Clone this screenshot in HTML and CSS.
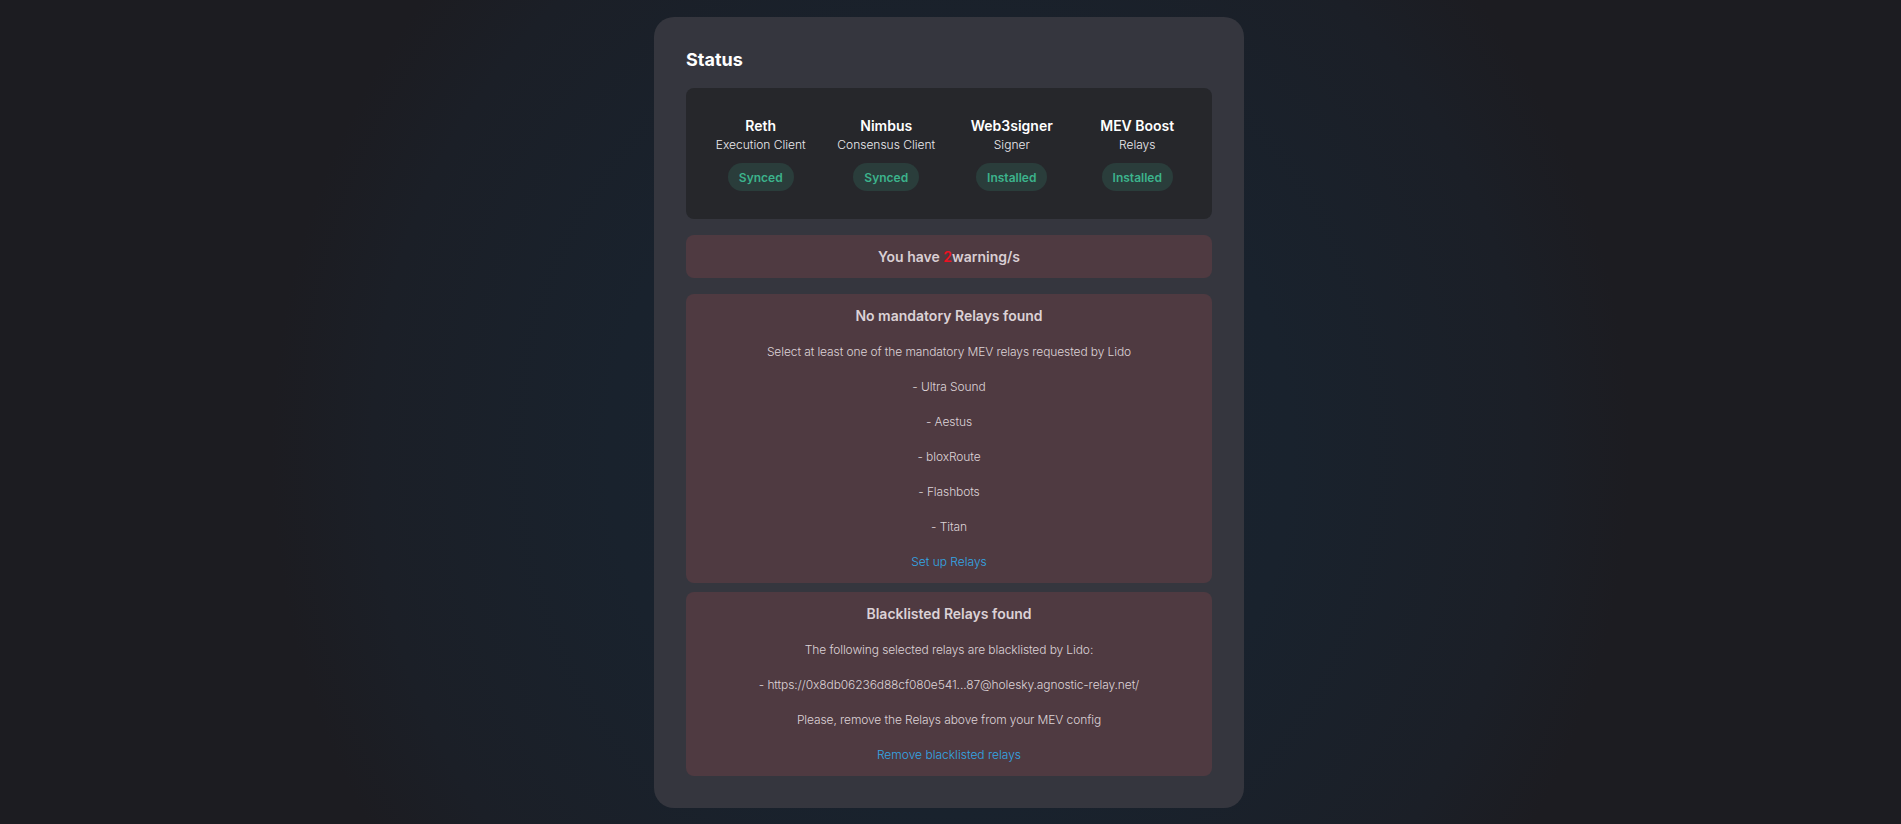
FILE: index.html
```html
<!DOCTYPE html>
<html lang="en">
<head>
<meta charset="utf-8">
<title>Status</title>
<link rel="stylesheet" href="styles.css">
</head>
<body>
<main class="page">
  <section class="card">
    <h1 class="card-title">Status</h1>
    <div class="clients">
      <div class="client">
        <div class="client-name">Reth</div>
        <div class="client-role">Execution Client</div>
        <span class="badge">Synced</span>
      </div>
      <div class="client">
        <div class="client-name">Nimbus</div>
        <div class="client-role">Consensus Client</div>
        <span class="badge">Synced</span>
      </div>
      <div class="client">
        <div class="client-name">Web3signer</div>
        <div class="client-role">Signer</div>
        <span class="badge">Installed</span>
      </div>
      <div class="client">
        <div class="client-name">MEV Boost</div>
        <div class="client-role">Relays</div>
        <span class="badge">Installed</span>
      </div>
    </div>

    <div class="warn-summary">You have <span class="warn-count">2</span>warning/s</div>

    <div class="warn-list">
      <div class="warn-box">
        <div class="warn-title">No mandatory Relays found</div>
        <p class="warn-text">Select at least one of the mandatory MEV relays requested by Lido</p>
        <p class="warn-text">- Ultra Sound</p>
        <p class="warn-text">- Aestus</p>
        <p class="warn-text">- bloxRoute</p>
        <p class="warn-text">- Flashbots</p>
        <p class="warn-text">- Titan</p>
        <a class="warn-link" href="#">Set up Relays</a>
      </div>
      <div class="warn-box">
        <div class="warn-title">Blacklisted Relays found</div>
        <p class="warn-text">The following selected relays are blacklisted by Lido:</p>
        <p class="warn-text">- https://0x8db06236d88cf080e541...87@holesky.agnostic-relay.net/</p>
        <p class="warn-text">Please, remove the Relays above from your MEV config</p>
        <a class="warn-link" href="#">Remove blacklisted relays</a>
      </div>
    </div>
  </section>
</main>
</body>
</html>
```

FILE: styles.css
```css
html, body {
  margin: 0;
  padding: 0;
}

body {
  min-height: 100vh;
  background-color: #1c1c20;
  background-image: radial-gradient(ellipse 680px 720px at 50% 55%, #182430 0%, #19222d 50%, #1b1f27 85%, #1c1c21 100%);
  font-family: Inter, "Noto Sans", "Liberation Sans", sans-serif;
  color: #ffffff;
}

.page {
  display: flex;
  justify-content: center;
  padding-top: 17px;
  padding-right: 3px;
}

.card {
  width: 526px;
  padding: 29px 32px 32px;
  background: #35363e;
  border-radius: 20px;
  display: flex;
  flex-direction: column;
}

.card-title {
  margin: 0 0 14px;
  font-size: 18px;
  line-height: 28px;
  font-weight: 700;
  color: #ffffff;
}

.clients {
  display: grid;
  grid-template-columns: repeat(4, 1fr);
  padding: 28px 12px;
  background: #26272b;
  border-radius: 8px;
}

.client {
  display: flex;
  flex-direction: column;
  align-items: center;
}

.client-name {
  font-size: 14px;
  line-height: 20px;
  font-weight: 600;
  color: #ffffff;
}

.client-role {
  font-size: 12px;
  line-height: 18px;
  font-weight: 300;
  color: #ecebef;
}

.badge {
  margin-top: 9px;
  height: 28px;
  padding: 0 11px;
  display: inline-flex;
  align-items: center;
  border-radius: 14px;
  background: #2a3d3b;
  color: #3cb38c;
  font-size: 12px;
  font-weight: 600;
}

.warn-summary {
  margin-top: 16px;
  padding: 12px 16px;
  background: #4f3a41;
  border-radius: 8px;
  text-align: center;
  font-size: 14px;
  line-height: 19px;
  font-weight: 600;
  color: #d9ced3;
}

.warn-count {
  color: #ee1122;
}

.warn-list {
  margin-top: 16px;
  display: flex;
  flex-direction: column;
  gap: 9px;
}

.warn-box {
  padding: 12px 16px;
  background: #4f3a41;
  border-radius: 8px;
  display: flex;
  flex-direction: column;
  align-items: center;
  gap: 16px;
  text-align: center;
}

.warn-title {
  font-size: 14px;
  line-height: 20px;
  font-weight: 600;
  color: #dcd2d6;
}

.warn-text {
  margin: 0;
  font-size: 12px;
  line-height: 19px;
  font-weight: 300;
  letter-spacing: -0.1px;
  color: #ddd3d7;
}

.warn-link {
  font-size: 12px;
  line-height: 19px;
  font-weight: 300;
  color: #33a7e6;
  text-decoration: none;
}
```
